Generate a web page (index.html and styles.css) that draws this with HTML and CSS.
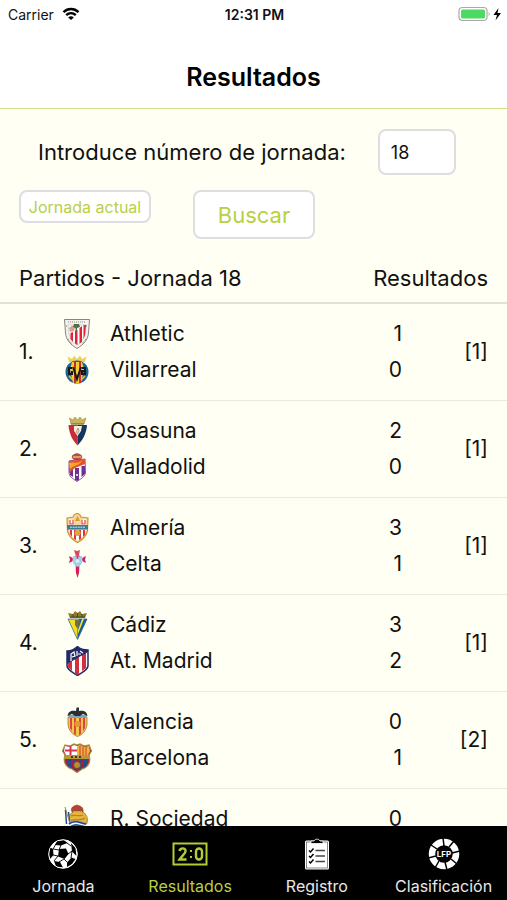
FILE: index.html
```html
<!DOCTYPE html>
<html lang="es">
<head>
  <meta charset="UTF-8">
  <meta name="viewport" content="width=device-width, initial-scale=1.0">
  <title>Resultados</title>
  <link rel="stylesheet" href="styles.css">
</head>
<body>
  <div class="status">
    <div class="carrier">
      Carrier
      <svg width="18" height="14" viewBox="0 0 18 14" fill="none" stroke="#000" stroke-width="2.4">
        <path d="M1.5 5.2C5.8 1 12.2 1 16.5 5.2"/>
        <path d="M4.2 8.2C7 5.6 11 5.6 13.8 8.2"/>
        <path d="M9 13L6.2 10.4C7.8 8.9 10.2 8.9 11.8 10.4Z" fill="#000" stroke="none"/>
      </svg>
    </div>
    <div class="time">12:31 PM</div>
    <div class="battery">
      <svg width="43" height="16" viewBox="0 0 43 16">
        <rect x="1" y="1.5" width="28" height="13" rx="3.5" fill="#fff" stroke="#aaa" stroke-width="1.2"/>
        <rect x="3" y="3.5" width="24" height="9" rx="1.5" fill="#4cd964"/>
        <path d="M30.6 6v4c1.4-.6 1.4-3.4 0-4z" fill="#aaa"/>
        <path d="M40.5 2L35.5 9H39L37.5 14.5L43 7H39.5Z" fill="#000"/>
      </svg>
    </div>
  </div>

  <header class="header">
    <h1>Resultados</h1>
  </header>

  <main class="main">
    <form class="search">
      <div class="search_row">
        <label for="jornada">Introduce número de jornada:</label>
        <input type="text" id="jornada" value="18" inputmode="numeric">
      </div>
      <div class="search_btns">
        <button type="button" class="btn_actual">Jornada actual</button>
        <button type="button" class="btn_buscar">Buscar</button>
      </div>
    </form>

    <table class="results">
      <thead>
        <tr>
          <th colspan="3">Partidos - Jornada 18</th>
          <th colspan="2" class="right">Resultados</th>
        </tr>
      </thead>
      <tbody>
        <tr>
          <td class="num">1.</td>
          <td class="crests">
            <svg viewBox="0 0 30 30">
              <path d="M2.5 .5H27.5L26.5 14C26 21 21 26 15 29.5C9 26 4 21 3.5 14Z" fill="#f3f2ed" stroke="#777" stroke-width=".9"/>
              <path d="M6 6H24L23 15C22 20 19 24 15 26C11 24 8 20 7 15Z" fill="#fff" stroke="#aaa" stroke-width=".5"/>
              <path d="M8.5 14L11 13V23L8.5 20ZM13 12L15.500 11V26L13 24.500ZM17.500 9L20 7V23L17.500 24.500ZM21.500 6H24L23 16L21.500 20Z" fill="#df2438"/>
              <path d="M7 9L10 6.500L13 8L12 12L8 13Z" fill="#d9a38b"/>
              <path d="M12 5h5l1 3-3 1v4h-1.500V9L11 8Z" fill="#4d6e4b"/>
              <path d="M6 3H24M4 7H6M24 7H26M6 20L10 25M24 20L20 25" stroke="#8a8580" stroke-width="1" stroke-dasharray="1 1"/>
            </svg>
            <svg viewBox="0 0 30 30">
              <path d="M7 7L5.5 1.5L10 4L12 .5L15 4L18 .5L20 4L24.5 1.5L23 7Z" fill="#ecd15f"/>
              <circle cx="15" cy="17" r="11.5" fill="#1c6398"/>
              <path d="M10 7H20L22 14L19 28H11L8 14Z" fill="#f5cf2e"/>
              <path d="M12 6H14V28H12ZM17 6H19V28H17Z" fill="#c52d2d"/>
              <path d="M10 13H7v6h3v-3M11 12l4 12 4-12M20 13h3v6h-3v-3h3" fill="none" stroke="#17181b" stroke-width="2"/>
              <path d="M7 21L11 25M23 21L19 25" stroke="#eec42b" stroke-width="1.5"/>
            </svg>
          </td>
          <td class="teams"><div>Athletic</div><div>Villarreal</div></td>
          <td class="goals"><div>1</div><div>0</div></td>
          <td class="sign">[1]</td>
        </tr>
        <tr>
          <td class="num">2.</td>
          <td class="crests">
            <svg viewBox="0 0 30 30">
              <path d="M9 8L7.5 2L11 4L13 1L15.5 4L18 1L20 4L24 2L22 8Z" fill="#c9b458" stroke="#8b7734" stroke-width=".5"/>
              <path d="M6.5 9H15.5V29.5C10 24 7 17 6.5 9Z" fill="#c92b38"/>
              <path d="M15.5 9H25C24.5 17 21 24 15.5 29.5Z" fill="#17365f"/>
              <path d="M12 10H20L19 15L15.5 20L12 15Z" fill="#f4eee4"/>
              <path d="M14 17L16 12L17 15L15 18" fill="none" stroke="#b39b62"/>
              <path d="M9 8H22" stroke="#806d2e"/>
            </svg>
            <svg viewBox="0 0 30 30">
              <path d="M10 6C9 3 12 2 15 1C18 2 21 3 20 6L18 8H12Z" fill="#b84b54"/>
              <path d="M11 5H19" stroke="#e2c05c" stroke-width="1.5"/>
              <path d="M7 9L14 8L23 7L23.5 21C22 26 18 27 15 29.5C12 27 8 26 7 21Z" fill="#fff" stroke="#6d2585" stroke-width=".8"/>
              <path d="M8 17H11V25L8 23ZM13 16H17V28L15 29L13 28ZM19.5 14H23V22L19.5 25Z" fill="#713092"/>
              <path d="M7 9L15 8L23 7V12L13 16L7 21Z" fill="#e6522a"/>
              <path d="M7 11C12 9 16 13 20 8C18 14 13 12 8 17Z" fill="#f5a82e"/>
              <path d="M14 23h2" stroke="#ddd" stroke-width="2"/>
            </svg>
          </td>
          <td class="teams"><div>Osasuna</div><div>Valladolid</div></td>
          <td class="goals"><div>2</div><div>0</div></td>
          <td class="sign">[1]</td>
        </tr>
        <tr>
          <td class="num">3.</td>
          <td class="crests">
            <svg viewBox="0 0 30 30">
              <path d="M5 5L11 4C12 1 14 .5 15.5 .5C17 .5 18 1 19 4L26 5L25.5 18C24 24 20 27 15.5 29.5C11 27 7 24 5.5 18Z" fill="#f3d69b" stroke="#cc9732" stroke-width="1.2"/>
              <path d="M7 6L12 7V12H7ZM19 7L24 6V12H19Z" fill="#fff"/>
              <path d="M8 7V11H11V7M20 7V11H23V7" fill="none" stroke="#d74450" stroke-width="1.2"/>
              <path d="M15.5 3L18 8H13Z" fill="#d39c2e"/>
              <path d="M7 17H24L22 23L15.5 28L9 23Z" fill="#fff"/>
              <path d="M8 17H10V24L8 21ZM12 17H14V27L12 26ZM17 17H19V26L17 27ZM21 17H23V22L21 24Z" fill="#d83a45"/>
              <circle cx="15.5" cy="20" r="3" fill="#e0a638"/>
              <rect x="5" y="12" width="21" height="4.5" fill="#367e99"/>
              <path d="M8 14.2H23" stroke="#e5e4d0" stroke-dasharray="2 .6"/>
            </svg>
            <svg viewBox="0 0 30 30">
              <path d="M13.5 6L12 1L15 2L18 1L17 6Z" fill="#d84b5d"/>
              <path d="M7 7L10 8.500L12 10.500L10 12.500L7 14L8 10.500ZM24 7L21 8.500L19 10.500L21 12.500L24 14L23 10.500Z" fill="#d91e55"/>
              <path d="M13.500 15H17.500L17 24L15.500 29L14 24Z" fill="#d91e55"/>
              <path d="M11 7H20L20.5 12C20 15 18 17 15.5 18C13 17 11 15 10.5 12Z" fill="#9dd0ec"/>
              <path d="M15.5 4V12M13.5 7H17.5" stroke="#d64466" stroke-width="1.5"/>
              <circle cx="15.5" cy="12" r="2" fill="#d9eef5"/>
            </svg>
          </td>
          <td class="teams"><div>Almería</div><div>Celta</div></td>
          <td class="goals"><div>3</div><div>1</div></td>
          <td class="sign">[1]</td>
        </tr>
        <tr>
          <td class="num">4.</td>
          <td class="crests">
            <svg viewBox="0 0 30 30">
              <path d="M6 9H25L15.5 29.5Z" fill="#f5dc25" stroke="#347087" stroke-width=".8"/>
              <path d="M17 9H25L15.5 29.5V18Z" fill="#175d9b"/>
              <path d="M20 9H22L16 24V20Z" fill="#f4df3a"/>
              <path d="M8 8L6 3L11 4L13 1L15.5 3L18 1L20 4L25 3L23 8Z" fill="#8f7a2b"/>
              <path d="M8 7H23M11 4V7M15.5 3V7M20 4V7" stroke="#51461e" stroke-width="1"/>
              <path d="M13 10H18L17 16L15 18L13 15Z" fill="#74703d"/>
            </svg>
            <svg viewBox="0 0 30 30">
              <path d="M5 5C9 5 13 3 15.5 .5C18 3 22 4 26 4V20C25 25 20 26 15.5 29.5C11 26 6 25 5 20Z" fill="#fff" stroke="#252c65" stroke-width="1.5"/>
              <path d="M6 17L10 15V25L6 21ZM13 12L17 9V28L15.5 29L13 27ZM20 7L24 5V22L20 25Z" fill="#d32f3d"/>
              <path d="M5 5C9 5 13 3 15.5 .5C18 3 22 4 26 4V6L5 18Z" fill="#222b65"/>
              <path d="M9 15V8L12 6L13 10L10 11M15 5V10M18 5L21 7M16 8L19 8" fill="none" stroke="#fff" stroke-width="1.2"/>
            </svg>
          </td>
          <td class="teams"><div>Cádiz</div><div>At. Madrid</div></td>
          <td class="goals"><div>3</div><div>2</div></td>
          <td class="sign">[1]</td>
        </tr>
        <tr>
          <td class="num">5.</td>
          <td class="crests">
            <svg viewBox="0 0 30 30">
              <path d="M6 10H25V18C24 24 20 28 15.5 29.5C11 28 7 24 6 18Z" fill="#f1c64a" stroke="#a87932" stroke-width=".8"/>
              <path d="M8 11H10V24L8 21ZM12 11H14V28L12 27ZM17 11H19V27L17 28ZM21 11H23V21L21 24Z" fill="#dc463e"/>
              <circle cx="15.5" cy="17" r="3" fill="#e39a35"/>
              <path d="M6 8H25L24 11H7Z" fill="#77a9bc"/>
              <path d="M5.5 9C6 4 10 3 14 4L14.5 .5H17L17 4C21 3 25 4 25.5 9L21 7L18 9H13L10 7Z" fill="#292f34"/>
            </svg>
            <svg viewBox="0 0 30 30">
              <path d="M3 2L8 3L12 1L15 2L18 1L22 3L27 2L29.5 8L27 12C29 18 27 24 20 26L15 29.5L10 26C3 24 1 18 3 12L.5 8Z" fill="#a11e4c" stroke="#a5883a" stroke-width="1.2"/>
              <path d="M3 3L8 4L12 2L15 3V12H4L2 8Z" fill="#fff"/>
              <path d="M8.5 3V12M3 7.5H15" stroke="#d63745" stroke-width="2"/>
              <path d="M15 3L18 2L22 4L27 3L28 8L26 12H15Z" fill="#efb53d"/>
              <path d="M18 3V12M21 4V12M24 4V12" stroke="#cf5138" stroke-width="1.2"/>
              <path d="M6 17H9V25L6 23ZM12 17H14V28L12 26ZM17 17H19V26L17 27ZM22 17H25V22L22 25Z" fill="#244b8d"/>
              <rect x="2" y="12" width="26" height="4" fill="#bb9638"/>
              <path d="M9 14H21" stroke="#443b24" stroke-width="2" stroke-dasharray="2 2"/>
              <circle cx="15" cy="22" r="3.5" fill="#b98f35" stroke="#58482e" stroke-width=".8"/>
            </svg>
          </td>
          <td class="teams"><div>Valencia</div><div>Barcelona</div></td>
          <td class="goals"><div>0</div><div>1</div></td>
          <td class="sign">[2]</td>
        </tr>
        <tr>
          <td class="num"></td>
          <td class="crests">
            <svg viewBox="0 0 30 30">
              <circle cx="16" cy="16" r="9.5" fill="#e6b53a" stroke="#9b7528" stroke-width=".8"/>
              <path d="M9 12C12 10 17 13 21 11M8 17C12 14 17 18 23 14" fill="none" stroke="#b38128" stroke-width="1.2"/>
              <path d="M10 8C8 3 12 2 15 1C18 2 22 3 21 8L18 7H13Z" fill="#b44332" stroke="#77402d" stroke-width=".6"/>
              <path d="M11 8H20" stroke="#e0b242" stroke-width="1.5"/>
              <path d="M2.5 5C4 3 6 5 7 8L9 20L3 21Z" fill="#fff"/>
              <path d="M3.5 6L4.5 20M6.5 8L8 20" stroke="#244d9b" stroke-width="1.5"/>
              <path d="M3 3L9 23" stroke="#a48740" stroke-width="1"/>
              <path d="M6 20C13 14 17 18 23 19L28 23V28H6Z" fill="#fff"/>
              <path d="M7 20C13 15 18 19 24 20M7 24C13 18 18 22 27 24M10 26C15 22 21 26 27 28" fill="none" stroke="#244d9b" stroke-width="1.8"/>
            </svg>
          </td>
          <td class="teams"><div>R. Sociedad</div></td>
          <td class="goals"><div>0</div></td>
          <td class="sign"></td>
        </tr>
      </tbody>
    </table>
  </main>

  <nav class="tabs">
    <a href="#jornada">
      <svg viewBox="0 0 32 32">
        <circle cx="16" cy="16" r="14.3" fill="#fff"/>
        <path d="M12 11L19 10.500L21.500 16L17.500 21L11 18.500ZM10 3L17 2L20.500 5L14 7.500L8 7ZM24 5L28.500 10L29.500 18L25 13.500ZM2.500 9L6 11L6.500 17L3 21L1.500 16ZM24.500 19.500L28.500 21L25 26L20 29L20 24.500ZM7 23L13 24L16 29.500L9 28.500Z" fill="#000"/>
        <path d="M14 7L12 12M20 5L24 8M25 13L21 16M17 21L20 24M11 18L7 23M6 11L9 6M6 11L12 12M6 17L11 18M24 20L25 13M12 24L17 21" stroke="#000" stroke-width=".9"/>
        <circle cx="16" cy="16" r="14.3" fill="none" stroke="#fff"/>
      </svg>
      Jornada
    </a>
    <a href="#resultados" class="active">
      <svg class="score" viewBox="0 0 36 32" fill="none" stroke="#b5cb35">
        <rect x="1.5" y="5.5" width="33" height="21" stroke-width="2"/>
        <path d="M7.5 13C8 9.500 14 9.500 13.500 13C13.500 15.500 10 18 7.500 21.500H14.500" stroke-width="2.4"/>
        <rect x="24" y="10.5" width="6" height="11" rx="3" stroke-width="2.4"/>
        <path d="M19 12V14M19 18V20" stroke-width="2"/>
      </svg>
      Resultados
    </a>
    <a href="#registro">
      <svg viewBox="0 0 32 32">
        <rect x="4" y="2.5" width="24" height="29" rx="1.5" fill="#fff"/>
        <rect x="5.5" y="4" width="21" height="26" fill="none" stroke="#555" stroke-width=".7"/>
        <path d="M10 5.5V3H13C14 .5 18 .5 19 3H22V5.5Z" fill="#000" stroke="#fff" stroke-width=".8"/>
        <path d="M8 12.5L9.5 14L12.5 10.5M8 18L9.5 19.5L12.5 16M8 23.5L9.5 25L12.5 21.5" fill="none" stroke="#000" stroke-width="1.5"/>
        <path d="M14.5 12.5H24M14.5 18H24M14.5 23.5H24" stroke="#444" stroke-width="1.3"/>
      </svg>
      Registro
    </a>
    <a href="#clasificacion">
      <svg viewBox="0 0 32 32">
        <circle cx="16" cy="16" r="12" fill="none" stroke="#fff" stroke-width="6.500"/>
        <path d="M15 0L16 8M26 3L21 9M32 13L24 15M29 26L23 21M19 32L17 24M7 30L11 23M0 20L8 18M3 7L9 11" stroke="#000" stroke-width="1.5"/>
        <text x="16" y="19" text-anchor="middle" class="lfp">LFP</text>
      </svg>
      Clasificación
    </a>
  </nav>
</body>
</html>
```
FILE: styles.css
```css
:root {
  /* color */
  --color_main: #b9cf45;
  --color_bg: #fffff3;
  --color_line: #e9e9e0;
}

* {
  box-sizing: border-box;
  font-family: Inter, "Liberation Sans", sans-serif;
}

body {
  margin: 0;
  display: flex;
  flex-direction: column;
  height: 100vh;
  background: #fff;
  color: #111;
  font-size: 22px;
}

.status {
  display: grid;
  grid-template-columns: 1fr auto 1fr;
  align-items: center;
  height: 28px;
  padding: 0 6px 0 8px;
  font-size: 14px;
}

.carrier {
  display: flex;
  align-items: center;
  gap: 8px;
}

.time {
  font-weight: 600;
}

.battery {
  display: flex;
  justify-content: flex-end;
}

.header {
  display: flex;
  justify-content: center;
  align-items: center;
  height: 81px;
  padding-top: 18px;
  border-bottom: 1px solid #d5e08c;
}

.header h1 {
  margin: 0;
  color: #000;
  font-size: 25px;
  font-weight: 600;
}

.main {
  flex: 1;
  min-height: 0;
  overflow-y: auto;
  scrollbar-width: none;
  background: var(--color_bg);
}

.search {
  padding: 20px 19px 14px;
}

.search_row {
  display: flex;
  align-items: center;
  gap: 32px;
  padding-left: 19px;
}

.search input {
  width: 78px;
  height: 46px;
  padding: 0 11px;
  border: 2px solid #dedee2;
  border-radius: 8px;
  background: #fff;
  color: #111;
  font-size: 18px;
}

.search_btns {
  display: flex;
  align-items: flex-start;
  gap: 42px;
  margin-top: 15px;
}

.search_btns button {
  padding: 0;
  border: 2px solid #dedee2;
  border-radius: 8px;
  background: #fff;
  color: var(--color_main);
  cursor: pointer;
}

.search_btns .btn_actual {
  width: 132px;
  height: 33px;
  font-size: 16px;
}

.search_btns .btn_buscar {
  width: 122px;
  height: 49px;
  font-size: 22px;
}

.results {
  width: 100%;
  border-spacing: 0;
}

.results th {
  height: 51px;
  padding: 0 0 0 19px;
  border-bottom: 2px solid #e1e1da;
  font-weight: 400;
  text-align: left;
}

.results .right {
  padding: 0 19px 0 0;
  text-align: right;
}

.results td {
  padding: 12px 0;
  border-bottom: 1px solid var(--color_line);
  font-size: 21px;
  line-height: 36px;
}

.results .num {
  width: 62px;
  padding-left: 19px;
}

.results .crests {
  width: 48px;
  vertical-align: top;
}

.crests svg {
  display: block;
  width: 30px;
  height: 36px;
  padding: 3px 0;
}

.results .goals {
  width: 40px;
  text-align: right;
}

.results .sign {
  width: 105px;
  padding-right: 19px;
  text-align: right;
}

.results tr:last-child td {
  vertical-align: top;
}

.tabs {
  display: grid;
  grid-template-columns: repeat(4, 1fr);
  height: 74px;
  background: #000;
}

.tabs a {
  display: flex;
  flex-direction: column;
  align-items: center;
  gap: 6px;
  padding-top: 12px;
  color: #e8e8e8;
  font-size: 16px;
  line-height: 20px;
  text-decoration: none;
}

.tabs svg {
  width: 32px;
  height: 32px;
}

.tabs .score {
  width: 36px;
}

.tabs .active {
  color: var(--color_main);
}

.lfp {
  fill: #fff;
  font-size: 8px;
  font-weight: 700;
}
```
